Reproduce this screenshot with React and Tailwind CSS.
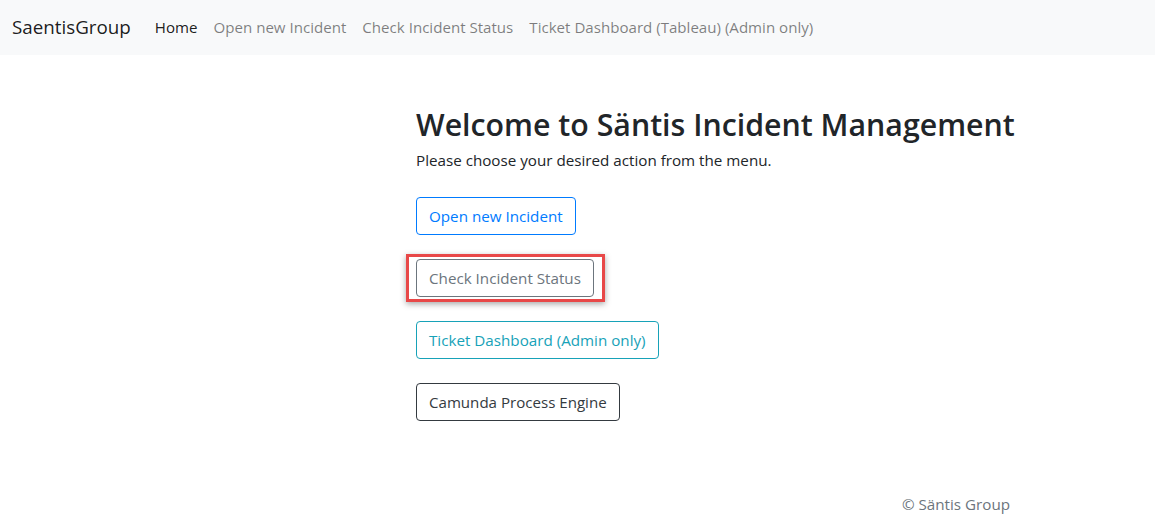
import React from 'react';

const font = { fontFamily: '"Open Sans", "Noto Sans", sans-serif' };

export default function App() {
  const links = ['Open new Incident', 'Check Incident Status', 'Ticket Dashboard (Tableau) (Admin only)'];

  return (
    <div style={font} className="min-h-[520px] bg-white text-[#212529]">
      {/* Navbar */}
      <nav className="flex h-[55px] items-center bg-[#f8f9fa] px-3">
        <span className="mr-4 text-[18.8px] text-black/90">SaentisGroup</span>
        <a className="px-2 text-[15.1px] text-black/90">Home</a>
        {links.map(l => (
          <a key={l} className="px-2 text-[15.1px] text-black/50">{l}</a>
        ))}
      </nav>

      {/* Main */}
      <main className="pl-[416px] pt-[52px]">
        <h1 className="text-[30.3px] font-semibold leading-[1.2]">Welcome to Säntis Incident Management</h1>
        <p className="mt-[6px] text-[15.2px]">Please choose your desired action from the menu.</p>

        <div className="mt-[25px] flex flex-col items-start gap-[24px]">
          <button className="h-[38px] rounded border border-[#007bff] px-3 text-[15.2px] text-[#007bff]">
            Open new Incident
          </button>
          <div className="-ml-[10px] -my-[5px] border-[3px] border-[#e84848] py-[2px] pl-[7px] pr-[8px] shadow-[0_2px_6px_rgba(0,0,0,0.35)]">
            <button className="h-[38px] rounded border border-[#6c757d] px-3 text-[15.2px] text-[#6c757d]">
              Check Incident Status
            </button>
          </div>
          <button className="h-[38px] rounded border border-[#17a2b8] px-3 text-[15.2px] text-[#17a2b8]">
            Ticket Dashboard (Admin only)
          </button>
          <button className="h-[38px] rounded border border-[#343a40] px-3 text-[15.1px] text-[#343a40]">
            Camunda Process Engine
          </button>
        </div>
      </main>

      <footer className="mt-[72px] flex justify-end pr-[145px] text-[15.2px] text-[#6c757d]">
        © Säntis Group
      </footer>
    </div>
  );
}
